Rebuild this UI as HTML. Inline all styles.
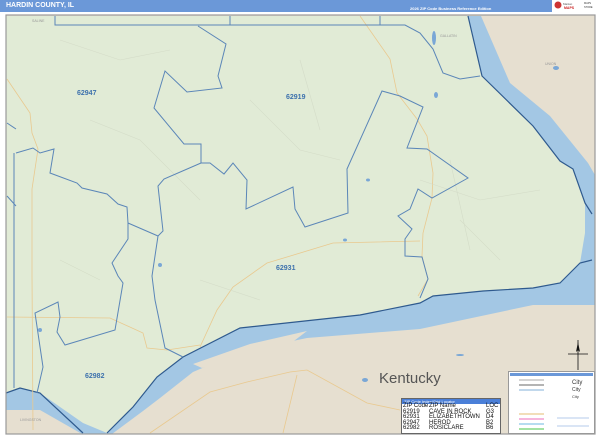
<!DOCTYPE html>
<html><head><meta charset="utf-8"><style>
html,body{margin:0;padding:0;width:600px;height:436px;overflow:hidden;background:#fff;font-family:"Liberation Sans",sans-serif}
#hdr{position:absolute;left:0;top:0;width:600px;height:12px;background:#6b98d8}
#t{position:absolute;left:6px;top:2px;color:#fff;font-weight:bold;font-size:7px}
#ed{position:absolute;left:410px;top:6px;color:#fff;font-size:4px;font-weight:bold}
#logo{position:absolute;left:552px;top:0;width:48px;height:12px;background:#fff}
svg{position:absolute;left:0;top:0}
#idx{position:absolute;left:401px;top:398px;width:98px;height:34px;background:#fff;border:1px solid #666;font-size:6px;line-height:5.6px;color:#111;overflow:hidden}
#idx .h{background:#4a7fd8;color:#fff;font-size:4px;height:5px;line-height:5px;padding-left:2px}
#idx .r{padding-left:1px;white-space:nowrap;height:5.6px}
#idx .r span{display:inline-block}
#leg{position:absolute;left:508px;top:371px;width:85px;height:61px;background:#fff;border:1px solid #999}
#leg .h{background:#6b98d8;height:3px;margin:1px}
</style></head><body>
<div id="hdr"><div id="t">HARDIN COUNTY, IL</div><div id="ed">2026 ZIP Code Business Reference Edition</div></div>
<div id="logo"><svg width="48" height="12"><circle cx="6" cy="5" r="3.5" fill="#c33"/><text x="11" y="5" font-size="3" fill="#555">Market</text><text x="12" y="9" font-size="3.5" fill="#c22" font-weight="bold">MAPS</text><text x="32" y="4" font-size="2.5" fill="#333">MAPS</text><text x="32" y="8" font-size="2.5" fill="#333">STORE</text></svg></div>
<svg width="600" height="436" viewBox="0 0 600 436" style="top:0">
<rect x="6" y="15" width="589" height="419" fill="#e6dfd0"/>
<path d="M458,16 L481,16 L510,83 L550,116 L588,163 L595,175 L595,305 L533,305 L420,329 L307,338 L240,352 L193,372 L160,398 L143,411 L112,434 L82,434 L40,410 L6,410 L6,380 Z" fill="#a3c7e4"/>
<path d="M193,364 L250,344 L307,331 L286,347 L240,357 L202,368 Z" fill="#e6dfd0"/>
<path d="M6,16 L468,16 L482,76 L533,126 L560,161 L573,169 L585,203 L585,233 L580,263 L560,283 L533,288 L483,291 L433,296 L420,303 L360,315 L240,328 L183,357 L157,377 L133,407 L107,433 L83,423 L40,393 L20,388 L6,393 Z" fill="#e1ebd6"/>
<path d="M468,16 L482,76 L533,126 L560,161 L573,169 L585,203 L592,214 M592,260 L580,263 L560,283 L533,288 L483,291 L433,296 L420,303 L360,315 L240,328 L183,357 L157,377 L133,407 L107,433 M83,433 L40,393 L20,388 L6,393" fill="none" stroke="#2f5a8e" stroke-width="1.2"/>
<g fill="none" stroke="#e9c98f" stroke-width="0.8">
<path d="M360,16 L390,59 L397,93 L417,119 L427,136 L433,173 L432,198 L423,233 L422,256 L428,279 L418,296"/>
<path d="M200,347 L217,310 L233,287 L267,263 L287,257 L333,243 L420,241"/>
<path d="M7,79 L30,113 L32,133 L38,149 L32,189 L32,276 L33,430"/>
<path d="M7,317 L110,318 L143,333 L147,348 L167,350 L200,345"/>
<path d="M150,433 L210,392 L247,382 L290,372 L307,370 L367,403 L400,410 M297,375 L283,433"/>
</g>
<g fill="none" stroke="#d4dcc8" stroke-width="0.6">
<path d="M60,40 L120,60 L170,50 M90,120 L140,140 L200,200 M250,100 L300,150 L340,160 M420,180 L480,200 L540,190 M460,220 L500,260 M300,60 L320,130 M200,280 L260,300 M60,260 L100,280 M450,160 L470,250"/>
</g>
<g fill="none" stroke="#5b86b8" stroke-width="1">
<path d="M55,16 L55,25 L405,25 L420,33 L433,49 L443,73 L460,79 L480,76 M230,16 L230,25 M380,16 L380,25"/>
<path d="M198,26 L226,44 L218,76 L222,88 L187,92 L165,71 L154,108 L184,144 L201,144 L201,163 L210,163 L224,174 L233,163 L247,180 L246,209 L293,187 L295,209 L305,227 L348,213 L347,169 L382,91 L400,96 L423,107 L407,148 L427,149 L468,178 L432,198 L418,189 L410,209 L398,216 L412,229 L405,239 L405,256 L422,257 L428,279 L420,298"/>
<path d="M201,163 L164,179 L158,186 L163,231 L158,236 L152,276 L155,300 L165,348 L183,357"/>
<path d="M16,153 L33,148 L40,153 L54,149 L50,173 L77,183 L82,188 L107,194 L118,204 L127,207 L128,223 L158,236 M128,223 L128,239 L112,263 L118,276 L123,283 L115,330 L65,345 L57,332 L60,317 L58,302 L35,313 L43,367 L37,393"/>
<path d="M14,153 L14,388 M7,123 L16,129 M7,196 L16,206"/>
</g>
<g fill="#7aa7d6">
<ellipse cx="434" cy="38" rx="2" ry="7"/><ellipse cx="368" cy="180" rx="2" ry="1.5"/><ellipse cx="345" cy="240" rx="2" ry="1.5"/><ellipse cx="160" cy="265" rx="2" ry="2"/><ellipse cx="40" cy="330" rx="2" ry="2"/><ellipse cx="365" cy="380" rx="3" ry="2"/><ellipse cx="460" cy="355" rx="4" ry="1"/><ellipse cx="556" cy="68" rx="3" ry="2"/><ellipse cx="436" cy="95" rx="2" ry="3"/></g>
<g font-family="Liberation Sans" font-size="7" font-weight="bold" fill="#3e72ad">
<text x="77" y="95">62947</text><text x="286" y="99">62919</text><text x="276" y="270">62931</text><text x="85" y="378">62982</text></g>
<g font-family="Liberation Sans" font-size="3.5" fill="#999"><text x="32" y="22">SALINE</text><text x="440" y="37">GALLATIN</text><text x="545" y="65">UNION</text><text x="20" y="421">LIVINGSTON</text></g>
<text x="379" y="383" font-family="Liberation Sans" font-size="15" fill="#555">Kentucky</text>
<g stroke="#111" stroke-width="0.8"><path d="M578,340 L578,370 M568,354 L588,354"/></g>
<path d="M578,342 L580,352 L578,350 L576,352 Z" fill="#111"/>
<rect x="6" y="15" width="589" height="419" fill="none" stroke="#999" stroke-width="1.2"/>
</svg>
<div id="idx"><div class="h">ZIP Code Index/Grid Locator</div>
<div class="r"><span style="width:26px">ZIP Code</span><span style="width:57px">ZIP Name</span>LOC</div>
<div class="r"><span style="width:26px">62919</span><span style="width:57px">CAVE IN ROCK</span>G3</div>
<div class="r"><span style="width:26px">62931</span><span style="width:57px">ELIZABETHTOWN</span>D4</div>
<div class="r"><span style="width:26px">62947</span><span style="width:57px">HEROD</span>B2</div>
<div class="r"><span style="width:26px">62982</span><span style="width:57px">ROSICLARE</span>B6</div></div>
<div id="leg"><div class="h"></div>
<svg width="85" height="58" style="top:4px"><g stroke-width="1.2">
<line x1="10" y1="4" x2="35" y2="4" stroke="#bbb"/><line x1="10" y1="9" x2="35" y2="9" stroke="#888"/><line x1="10" y1="14" x2="35" y2="14" stroke="#9cc0e0"/>
<line x1="10" y1="38" x2="35" y2="38" stroke="#e9c98f"/><line x1="10" y1="43" x2="35" y2="43" stroke="#f08ac8"/><line x1="10" y1="48" x2="35" y2="48" stroke="#8ac8e8"/><line x1="10" y1="53" x2="35" y2="53" stroke="#6cd06c"/>
<line x1="48" y1="42" x2="80" y2="42" stroke="#6b98d8" stroke-width="0.6"/><line x1="48" y1="50" x2="80" y2="50" stroke="#6b98d8" stroke-width="0.6"/></g>
<g font-size="6" fill="#333"><text x="63" y="8">City</text><text x="63" y="15" font-size="5">City</text><text x="63" y="22" font-size="4">City</text></g></svg></div>
</body></html>
